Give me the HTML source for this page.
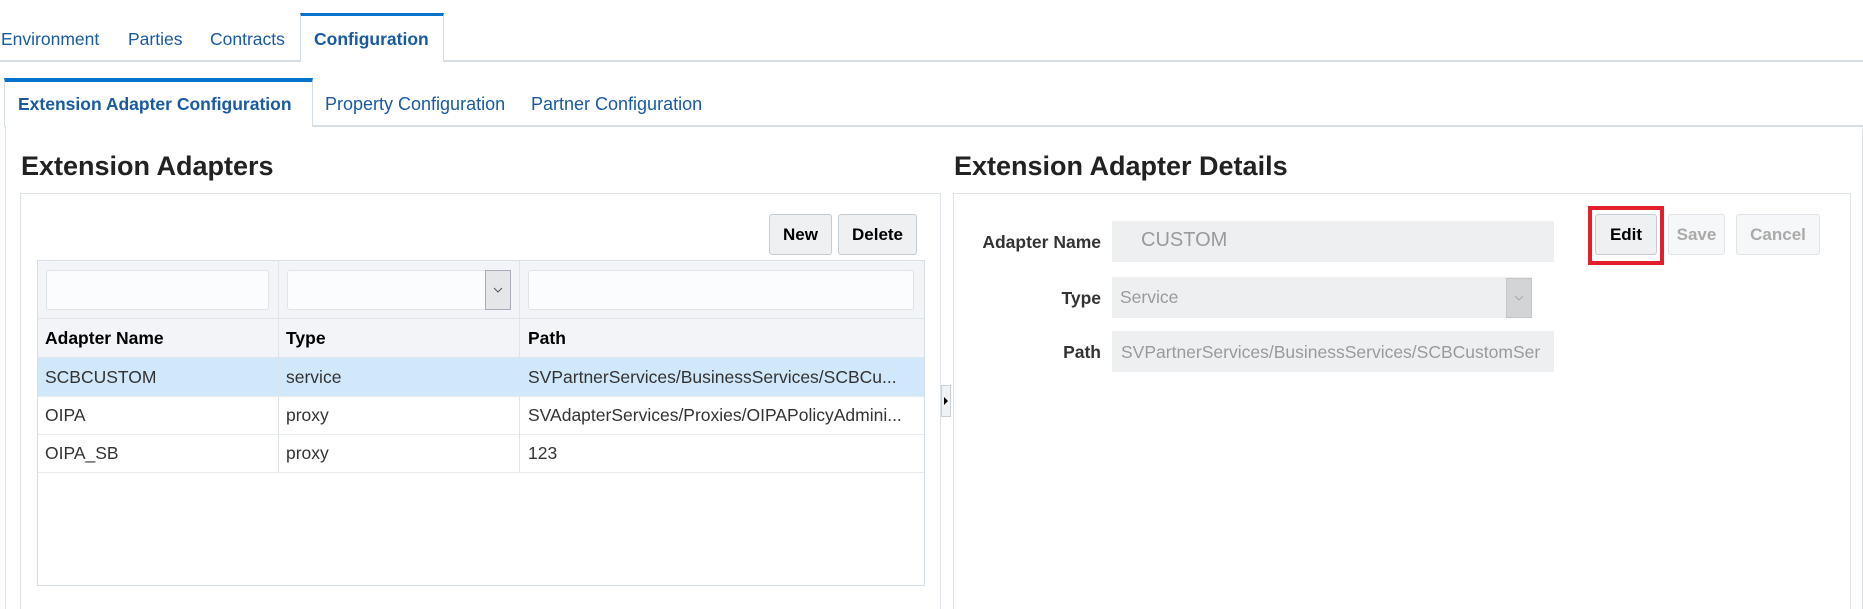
<!DOCTYPE html>
<html><head><meta charset="utf-8"><style>
*{box-sizing:border-box;margin:0;padding:0}
html,body{width:1863px;height:609px;overflow:hidden}
body{background:#fff;font-family:"Liberation Sans",Arial,sans-serif;position:relative;color:#333}
.a{position:absolute}
.t{font-size:17.5px;color:#1a5aa0;white-space:nowrap}
.btn{position:absolute;height:41px;border:1px solid #c4ccd4;border-radius:3px;background:#eef0f2;font-weight:bold;font-size:17px;color:#000;text-align:center;line-height:39px}
.dis{color:#aaa;background:#f6f7f8;border-color:#e0e4e8}
.cell{position:absolute;font-size:17.5px;white-space:nowrap;overflow:hidden}
.inp{position:absolute;background:#fbfcfd;border:1px solid #dfe4e9;border-radius:3px}
.vl{position:absolute;width:1px;background:#dfe4e9}
.hl{position:absolute;height:1px;background:#dfe4e9}
.lbl{position:absolute;font-weight:bold;font-size:17.5px;color:#333;text-align:right;width:200px}
.ro{position:absolute;background:#eeeff1;font-size:17.5px;color:#9a9a9a;white-space:nowrap;overflow:hidden}
</style></head><body>
<div class="hl" style="left:0;top:60px;width:1863px;background:#d5dde5;height:2px"></div>
<div class="a" style="left:300px;top:13px;width:144px;height:49px;background:#fff;border-left:1px solid #d5dde5;border-right:1px solid #d5dde5;border-top:3px solid #0572ce"></div>
<div class="a t" style="left:1px;top:29px">Environment</div>
<div class="a t" style="left:128px;top:29px">Parties</div>
<div class="a t" style="left:210px;top:29px">Contracts</div>
<div class="a t" style="left:314px;top:29px;font-weight:bold">Configuration</div>
<div class="hl" style="left:312px;top:125px;width:1551px;background:#d5dde5;height:2px"></div>
<div class="a" style="left:4px;top:78px;width:309px;height:49px;background:#fff;border-left:1px solid #d5dde5;border-right:1px solid #d5dde5;border-top:4px solid #0572ce"></div>
<div class="a t" style="left:18px;top:94px;font-weight:bold;font-size:17.5px">Extension Adapter Configuration</div>
<div class="a t" style="left:325px;top:94px;font-size:18px">Property Configuration</div>
<div class="a t" style="left:531px;top:94px;font-size:18px">Partner Configuration</div>
<div class="a" style="left:5px;top:126px;width:1858px;height:483px;border-left:1px solid #dde3e9;border-right:1px solid #dde3e9;border-radius:0 4px 0 0"></div>
<div class="a" style="left:21px;top:151px;font-size:27px;font-weight:bold;color:#222">Extension Adapters</div>
<div class="a" style="left:954px;top:151px;font-size:27px;font-weight:bold;color:#222">Extension Adapter Details</div>
<div class="a" style="left:20px;top:193px;width:921px;height:416px;border:1px solid #dde3e9;border-bottom:none"></div>
<div class="btn" style="left:769px;top:214px;width:63px">New</div>
<div class="btn" style="left:838px;top:214px;width:79px">Delete</div>
<div class="a" style="left:37px;top:260px;width:888px;height:326px;border:1px solid #d5dde5;background:#fff"></div>
<div class="a" style="left:38px;top:261px;width:886px;height:97px;background:#f2f4f7"></div>
<div class="inp" style="left:46px;top:270px;width:223px;height:40px"></div>
<div class="inp" style="left:287px;top:270px;width:224px;height:40px"></div>
<div class="a" style="left:485px;top:270px;width:26px;height:40px;background:#e4e6e8;border:1px solid #aab;"></div>
<svg class="a" style="left:493px;top:286px" width="10" height="8"><path d="M1 2 L5 6 L9 2" stroke="#555" fill="none" stroke-width="1"/></svg>
<div class="inp" style="left:528px;top:270px;width:386px;height:40px"></div>
<div class="hl" style="left:38px;top:318px;width:886px"></div>
<div class="a" style="left:38px;top:358px;width:886px;height:38px;background:#d1e7fa"></div>
<div class="hl" style="left:38px;top:357px;width:886px"></div>
<div class="hl" style="left:38px;top:396px;width:886px;background:#e8ecf0"></div>
<div class="hl" style="left:38px;top:434px;width:886px;background:#e8ecf0"></div>
<div class="hl" style="left:38px;top:472px;width:886px;background:#e8ecf0"></div>
<div class="vl" style="left:278px;top:261px;height:211px"></div>
<div class="vl" style="left:519px;top:261px;height:211px"></div>
<div class="cell" style="left:45px;top:328px;font-weight:bold;color:#000">Adapter Name</div>
<div class="cell" style="left:286px;top:328px;font-weight:bold;color:#000">Type</div>
<div class="cell" style="left:528px;top:328px;font-weight:bold;color:#000">Path</div>
<div class="cell" style="left:45px;top:367px">SCBCUSTOM</div>
<div class="cell" style="left:286px;top:367px">service</div>
<div class="cell" style="left:528px;top:367px;width:392px">SVPartnerServices/BusinessServices/SCBCu...</div>
<div class="cell" style="left:45px;top:405px">OIPA</div>
<div class="cell" style="left:286px;top:405px">proxy</div>
<div class="cell" style="left:528px;top:405px;width:392px">SVAdapterServices/Proxies/OIPAPolicyAdmini...</div>
<div class="cell" style="left:45px;top:443px">OIPA_SB</div>
<div class="cell" style="left:286px;top:443px">proxy</div>
<div class="cell" style="left:528px;top:443px">123</div>
<div class="a" style="left:941px;top:385px;width:10px;height:32px;background:#f0f2f4;border:1px solid #c8d0d8"></div>
<svg class="a" style="left:943px;top:396px" width="6" height="10"><path d="M1 1 L5 5 L1 9Z" fill="#000"/></svg>
<div class="a" style="left:953px;top:193px;width:898px;height:416px;border:1px solid #dde3e9;border-bottom:none"></div>
<div class="lbl" style="left:901px;top:232px">Adapter Name</div>
<div class="ro" style="left:1112px;top:221px;width:442px;height:41px;padding:8px 0 0 29px;font-size:20px">CUSTOM</div>
<div class="lbl" style="left:901px;top:288px">Type</div>
<div class="ro" style="left:1112px;top:277px;width:420px;height:41px;padding:10px 0 0 8px">Service</div>
<div class="a" style="left:1506px;top:278px;width:26px;height:40px;background:#d2d4d6;border:1px solid #c4c6c8"></div>
<svg class="a" style="left:1514px;top:294px" width="10" height="8"><path d="M1 2 L5 6 L9 2" stroke="#aaa" fill="none"/></svg>
<div class="lbl" style="left:901px;top:342px">Path</div>
<div class="ro" style="left:1112px;top:331px;width:442px;height:41px;padding:11px 0 0 9px">SVPartnerServices/BusinessServices/SCBCustomSer</div>
<div class="btn dis" style="left:1668px;top:214px;width:57px">Save</div>
<div class="btn dis" style="left:1736px;top:214px;width:84px">Cancel</div>
<div class="btn" style="left:1595px;top:214px;width:62px">Edit</div>
<div class="a" style="left:1588px;top:206px;width:76px;height:59px;border:4px solid #e3202a"></div>
</body></html>
